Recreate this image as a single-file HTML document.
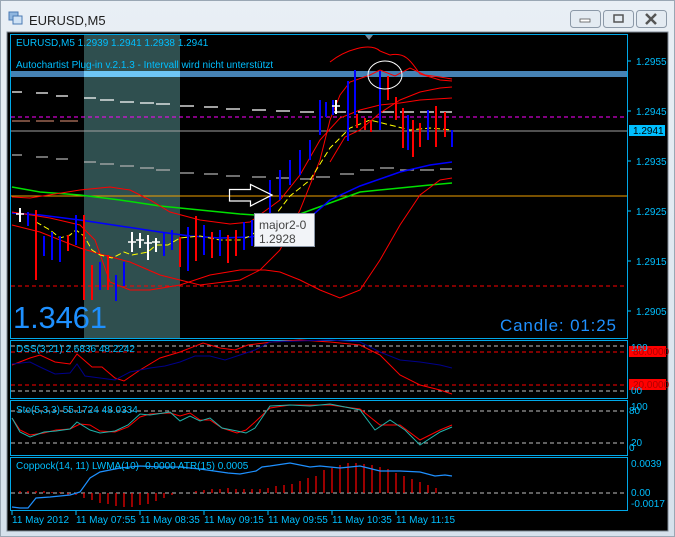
<!DOCTYPE html>
<html><head><meta charset="utf-8"><style>
html,body{margin:0;padding:0;width:675px;height:537px;overflow:hidden;background:#dbe5ef;font-family:"Liberation Sans",sans-serif}
svg{position:absolute;left:0;top:0}
</style></head><body>
<svg width="675" height="537" viewBox="0 0 675 537" xmlns="http://www.w3.org/2000/svg" font-family="Liberation Sans, sans-serif">
<defs><linearGradient id="tb" x1="0" y1="0" x2="0" y2="1"><stop offset="0" stop-color="#e9eff5"/><stop offset="1" stop-color="#d6e1ec"/></linearGradient></defs>
<rect x="0" y="0" width="675" height="537" fill="url(#tb)"/>
<rect x="0.5" y="0.5" width="674" height="536" fill="none" stroke="#9aa7b4"/>
<rect x="9" y="12" width="9" height="8" fill="#8fb6df" stroke="#4a79b3"/>
<rect x="13" y="16" width="9" height="8" fill="#cfe2f5" stroke="#4a79b3"/>
<text x="29" y="25" font-size="13" fill="#1e1e1e">EURUSD,M5</text>
<g fill="#e4ebf2" stroke="#8c99a8"><rect x="570.5" y="10.5" width="30" height="17" rx="3"/><rect x="603.5" y="10.5" width="30" height="17" rx="3"/><rect x="636.5" y="10.5" width="30" height="17" rx="3"/></g>
<rect x="580" y="19" width="10" height="3" fill="#fff" stroke="#555" stroke-width="0.8"/>
<rect x="614" y="15" width="9" height="7" fill="none" stroke="#555" stroke-width="1.5"/>
<path d="M646 14l10 10M656 14l-10 10" stroke="#555" stroke-width="2.5"/>
<rect x="7" y="32" width="661" height="499" fill="#000" stroke="#7f8a95"/>
<rect x="84" y="35" width="96" height="303" fill="#2f4f4f"/>
<g fill="none" stroke="#00a8e8" stroke-width="1">
<rect x="10.5" y="34.5" width="617" height="304"/>
<rect x="10.5" y="340.5" width="617" height="58"/>
<rect x="10.5" y="400.5" width="617" height="55"/>
<rect x="10.5" y="457.5" width="617" height="53"/>
</g>
<path d="M365 35l4 5l4-5z" fill="#778899"/>
<rect x="11" y="71" width="616" height="6" fill="#4682b4"/>
<rect x="84" y="71" width="96" height="6" fill="#6ec7f5"/>
<text x="16" y="46" font-size="10" fill="#00bfff">EURUSD,M5  1.2939 1.2941 1.2938 1.2941</text>
<text x="16" y="68" font-size="10" fill="#00bfff">Autochartist Plug-in v.2.1.3 - Intervall wird nicht unterstützt</text>
<line x1="11" y1="117" x2="627" y2="117" stroke="#ff00ff" stroke-dasharray="4,3"/>
<line x1="11" y1="131" x2="627" y2="131" stroke="#a0a0a0"/>
<line x1="11" y1="196" x2="627" y2="196" stroke="#f0a000"/>
<line x1="11" y1="286" x2="627" y2="286" stroke="#ff0000" stroke-dasharray="4,3"/>
<path d="M12 121h18M36 121h18M60 121h18" stroke="#e9967a"/>
<path d="M12 92h10M36 93h12M56 96h12M84 98h12M100 100h14M120 102h14M140 103h14M156 104h14M180 106h14M204 107h14M226 109h14M252 110h14M276 111h14M300 112h14M332 112h14M358 112h14M380 112h14M400 112h14M420 112h14M440 112h12" stroke="#fff" stroke-width="1.3"/>
<path d="M12 155h10M36 157h12M56 159h12M84 162h12M100 164h14M120 166h14M140 168h14M156 170h14M180 173h14M204 174h14M226 176h14M252 177h14M276 178h14M300 179h14M316 177h14M340 174h14M360 170h14M380 168h14M400 170h14M420 170h14M440 169h12" stroke="#b0b0b0" stroke-width="1.3"/>
<polyline points="12,187 40,192 80,195 120,200 160,206 200,210 240,214 270,216 300,214 330,203 360,192 400,188 430,185 452,183" fill="none" stroke="#00e000" stroke-width="1.5"/>
<polyline points="12,213 40,215 80,220 120,226 160,232 190,236 220,238 250,237 275,233 300,226 330,200 360,186 400,172 430,165 452,162" fill="none" stroke="#0000ff" stroke-width="1.5"/>
<polyline points="12,197 30,198 80,190 110,187 130,190 150,200 170,212 200,220 230,224 250,222 280,200 300,175 320,140 340,118 360,110 380,105 400,103 420,100 452,98" fill="none" stroke="#ff0000" stroke-width="1"/>
<polyline points="12,225 40,232 80,248 100,254 130,262 160,275 180,280 200,285 240,280 260,270 280,250 300,210 320,160 330,120 340,95 350,82 370,75 380,70 395,76 410,68 425,75 440,77 452,79" fill="none" stroke="#ff0000" stroke-width="1"/>
<polyline points="12,212 50,218 80,225 95,240 110,282 130,290 150,290 180,285 210,275 240,270 265,270 280,272 300,280 320,290 340,298 360,290 380,260 400,225 420,195 440,180 452,178" fill="none" stroke="#ff0000" stroke-width="1"/>
<polyline points="330,162 345,137 360,130 380,113 400,100 420,92 440,88 452,87" fill="none" stroke="#ff0000" stroke-width="1"/>
<path d="M330 62C345 50 370 42 380 51L390 55C405 52 410 60 420 74L440 80L452 81" fill="none" stroke="#ff0000"/>
<polyline points="36,222 50,230 60,238 70,235 76,230 84,236 92,250 100,255 112,258 124,252 132,255 148,252 156,245 168,245 180,238 200,236 220,240 240,240 250,236 270,222 290,196 310,180 330,148 350,128 370,120 390,125 410,130 430,128 452,130" fill="none" stroke="#ffff00" stroke-width="1" stroke-dasharray="6,3"/>
<g stroke-width="2">
<g stroke="#0000ff">
<path d="M28 212v14M44 236v20M52 232v28M60 236v26M76 215v30M100 262v28M116 275v26M124 262v24M164 232v24M172 230v20M188 227v44M204 225v30M220 230v26M244 222v28M252 220v26M270 180v40M280 170v30M290 160v25M300 150v25M310 140v20M320 100v35M326 102v15M333 100v15M348 81v60M355 70v45M380 71v59M408 115v35M428 110v30M452 130v17"/>
</g>
<g stroke="#ff0000">
<path d="M36 210v70M68 235v16M84 215v85M92 265v35M108 255v35M180 237v30M196 216v45M212 232v26M228 235v28M236 230v26M260 222v20M357 114v14M365 118v12M371 120v12M388 76v24M396 97v23M403 108v40M413 120v37M420 123v24M436 106v41M445 112v25"/>
</g>
<g stroke="#ffffff">
<path d="M20 208v14M132 232v20M140 233v15M148 235v25M156 238v14M336 100v14"/>
</g>
</g>
<path d="M16 214h8M128 242h8M136 240h8M144 243h8M152 242h8M332 106h8" stroke="#fff" stroke-width="1.5"/>
<ellipse cx="385" cy="75" rx="17" ry="14" fill="none" stroke="#fff"/>
<path d="M229.5 189.5h21v-5l21.5 10.5l-21.5 11v-5h-21z" fill="none" stroke="#fff" stroke-width="1.2"/>
<rect x="254.5" y="213.5" width="60" height="33" fill="#f2f4f8" stroke="#8a96a6"/>
<text x="259" y="229" font-size="12" fill="#444">major2-0</text>
<text x="259" y="243" font-size="12" fill="#444">1.2928</text>
<text x="13" y="328" font-size="31" fill="#1e90ff" textLength="94">1.3461</text>
<text x="500" y="331" font-size="17" fill="#1e90ff" textLength="116">Candle:  01:25</text>
<g font-size="10" fill="#00bfff">
<text x="636" y="65">1.2955</text><text x="636" y="115">1.2945</text><text x="636" y="165">1.2935</text><text x="636" y="215">1.2925</text><text x="636" y="265">1.2915</text><text x="636" y="315">1.2905</text>
</g>
<g stroke="#00bfff"><path d="M628 61h3M628 111h3M628 161h3M628 211h3M628 261h3M628 311h3"/></g>
<rect x="629" y="125" width="36" height="11" fill="#00bfff"/>
<text x="633" y="134" font-size="10" fill="#000">1.2941</text>
<g stroke-dasharray="4,3" stroke-width="1">
<line x1="11" y1="346" x2="627" y2="346" stroke="#c0c0c0"/>
<line x1="11" y1="352" x2="627" y2="352" stroke="#ff0000"/>
<line x1="11" y1="385" x2="627" y2="385" stroke="#ff0000"/>
<line x1="11" y1="391" x2="627" y2="391" stroke="#c0c0c0"/>
</g>
<polyline points="12,365 30,358 40,355 55,362 70,364 77,354 92,367 102,367 115,378 124,381 140,370 160,358 180,352 203,343 220,348 235,350 248,345 272,342 300,340 330,342 360,345 380,355 400,375 420,385 440,390 452,394" fill="none" stroke="#ff0000"/>
<polyline points="12,364 30,362 40,367 55,374 70,373 77,364 85,376 100,378 115,380 130,372 150,368 165,366 180,362 195,356 210,356 225,360 240,355 255,350 270,342 300,341 330,340 360,342 380,352 400,360 420,362 440,365 452,368" fill="none" stroke="#00008b"/>
<text x="16" y="352" font-size="10" fill="#00bfff">DSS(3,21) 2.6836 48.2242</text>
<rect x="629" y="346" width="37" height="11" fill="#ff0000"/>
<rect x="629" y="379" width="37" height="11" fill="#ff0000"/>
<g font-size="10" fill="#00bfff"><text x="631" y="351">100</text><text x="631" y="394">00</text></g>
<g font-size="10" fill="#b00000"><text x="633" y="355">80.0000</text><text x="633" y="388">20.0000</text></g>
<g stroke-dasharray="4,3" stroke="#c0c0c0"><line x1="11" y1="411" x2="627" y2="411"/><line x1="11" y1="443" x2="627" y2="443"/></g>
<polyline points="12,418 20,430 30,435 44,433 56,430 70,429 80,424 90,425 100,431 115,432 128,427 140,417 150,414 170,413 180,416 190,413 200,420 210,420 222,428 237,433 246,430 255,422 270,408 290,405 310,405 330,405 360,409 380,425 400,425 420,440 440,430 452,425" fill="none" stroke="#ff0000"/>
<polyline points="12,418 20,432 30,437 44,432 56,431 70,429 77,422 90,430 100,433 115,431 128,425 140,414 150,415 170,412 180,421 190,416 200,421 210,418 222,428 237,431 246,433 255,428 270,406 290,405 310,406 330,404 360,410 375,430 390,420 405,430 420,445 440,432 452,427" fill="none" stroke="#20b2aa"/>
<text x="16" y="413" font-size="10" fill="#00bfff">Sto(5,3,3) 55.1724 48.0334</text>
<g font-size="10" fill="#00bfff"><text x="631" y="410">100</text><text x="629" y="414">80</text><text x="631" y="446">20</text><text x="629" y="451">0</text></g>
<line x1="11" y1="493" x2="627" y2="493" stroke="#c0c0c0" stroke-dasharray="4,3"/>
<g stroke="#ff0000" stroke-width="1.2">
<path d="M20 493v-2M28 493v-2M36 493v-2M44 493v-2M52 493v-1M60 493v-1M68 493v2M76 493v2M84 493v5M92 493v7M100 493v10M108 493v11M116 493v13M124 493v14M132 493v14M140 493v12M148 493v11M156 493v8M164 493v5M172 493v2M196 493v-2M204 493v-3M212 493v-4M220 493v-4M228 493v-5M236 493v-4M244 493v-4M252 493v-4M260 493v-4M268 493v-5M276 493v-7M284 493v-8M292 493v-9M300 493v-12M308 493v-15M316 493v-17M324 493v-23M332 493v-25M340 493v-28M348 493v-30M356 493v-30M364 493v-29M372 493v-28M380 493v-26M388 493v-24M396 493v-20M404 493v-17M412 493v-14M420 493v-11M428 493v-8M436 493v-5"/>
</g>
<polyline points="12,507 20,508 28,508 36,498 50,497 70,495 80,492 90,478 100,472 120,468 140,466 160,467 180,467 200,469 228,473 240,474 256,471 262,467 270,466 290,463 310,467 320,466 340,468 360,466 380,471 400,471 420,472 435,476 445,475 452,476" fill="none" stroke="#1e90ff" stroke-width="1.2"/>
<text x="16" y="469" font-size="10" fill="#00bfff">Coppock(14, 11) LWMA(10) -0.0000  ATR(15) 0.0005</text>
<g font-size="10" fill="#00bfff"><text x="631" y="467">0.0039</text><text x="631" y="496">0.00</text><text x="631" y="507">-0.0017</text></g>
<g stroke="#00bfff"><path d="M12 511v4M76 511v4M140 511v4M204 511v4M268 511v4M332 511v4M396 511v4"/></g>
<g font-size="10" fill="#00bfff">
<text x="12" y="523">11 May 2012</text><text x="76" y="523">11 May 07:55</text><text x="140" y="523">11 May 08:35</text><text x="204" y="523">11 May 09:15</text><text x="268" y="523">11 May 09:55</text><text x="332" y="523">11 May 10:35</text><text x="396" y="523">11 May 11:15</text>
</g>
</svg>
</body></html>
